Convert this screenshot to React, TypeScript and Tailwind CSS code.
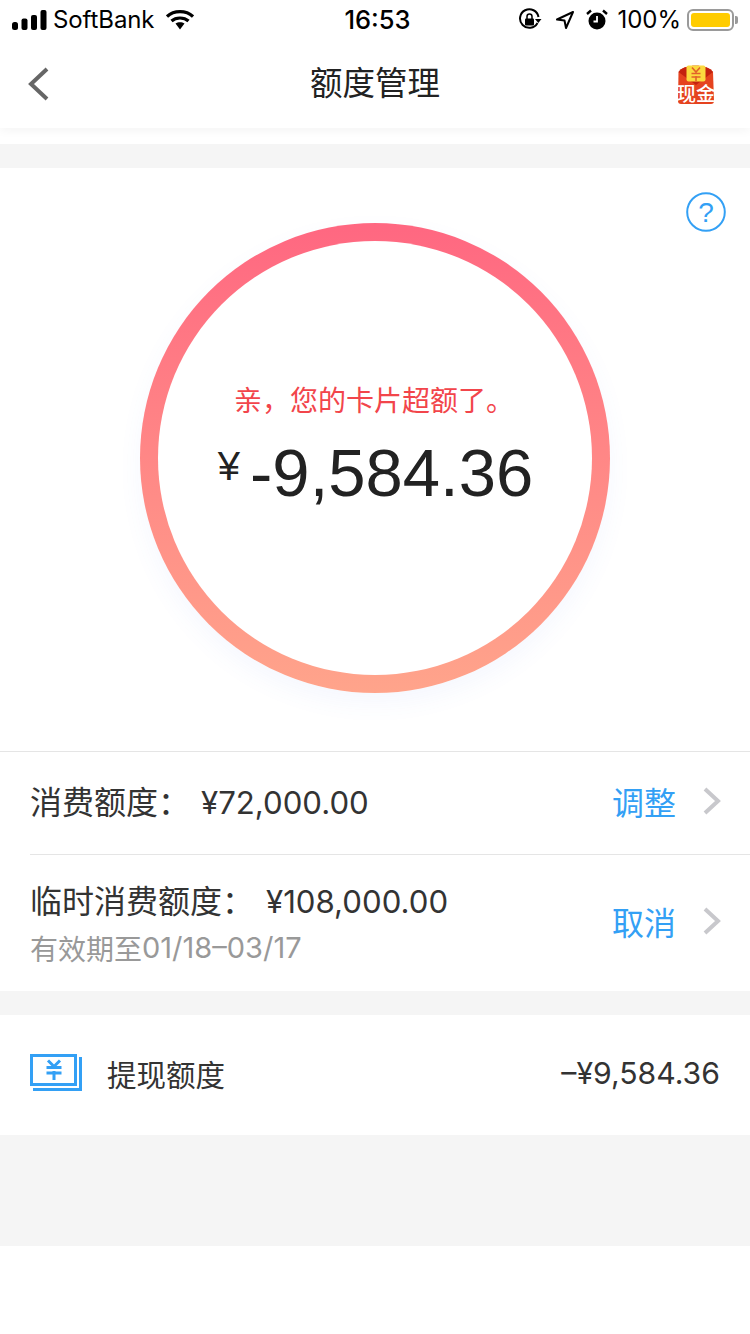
const cjk = "font-['Liberation_Sans','Noto_Sans_CJK_SC',sans-serif]";
const zh = "font-['Noto_Sans_CJK_SC',sans-serif]";

function Signal() {
  return (
    <svg width="36" height="20" viewBox="0 0 36 20" fill="#000">
      <rect x="0" y="12" width="6" height="8" rx="2.5" />
      <rect x="9.500" y="8.500" width="6" height="11.500" rx="2" />
      <rect x="19" y="5" width="6" height="15" rx="2" />
      <rect x="28.500" y="0" width="6" height="20" rx="2" />
    </svg>
  );
}

function Wifi() {
  return (
    <svg width="28" height="20" viewBox="0 0 28 20">
      <path d="M1 6.500 C8 0 20 0 27 6.500" fill="none" stroke="#000" strokeWidth="3.200" />
      <path d="M5.500 11 C10 7 18 7 22.500 11" fill="none" stroke="#000" strokeWidth="3.200" />
      <path d="M9.500 13.500 C12 11.700 16 11.700 18.500 13.500 L14 19.500 Z" fill="#000" />
    </svg>
  );
}

function RotationLock() {
  return (
    <svg width="24" height="24" viewBox="0 0 24 24" fill="none">
      <path d="M19.500 15 A9.300 9.300 0 1 1 20.500 9" stroke="#000" strokeWidth="2" />
      <path d="M17 11 L23.500 11 L20.300 15 Z" fill="#000" />
      <rect x="7" y="10.500" width="9" height="7" rx="1" fill="#000" />
      <path d="M9 11 V8.500 a2.500 2.500 0 0 1 5 0 V11" stroke="#000" strokeWidth="1.500" />
    </svg>
  );
}

function Location() {
  return (
    <svg width="20" height="20" viewBox="0 0 20 20" fill="none">
      <path d="M18 2 L2 9.500 L9.500 10.500 L11 18 Z" stroke="#000" strokeWidth="2" strokeLinejoin="round" />
    </svg>
  );
}

function Alarm() {
  return (
    <svg width="22" height="22" viewBox="0 0 22 22">
      <circle cx="11" cy="12" r="8.500" fill="#000" />
      <path d="M11 7 V12.500 H7.500" fill="none" stroke="#fff" strokeWidth="1.800" />
      <path d="M1 5 L5 1.500 M21 5 L17 1.500" stroke="#000" strokeWidth="2.400" />
    </svg>
  );
}

function Battery() {
  return (
    <div className="flex items-center">
      <div className="w-[47px] h-[22px] rounded-[6px] border-2 border-[#9a9a9a] p-[2px] flex">
        <div className="flex-1 rounded-[3px] bg-[#ffcc00]" />
      </div>
      <div className="w-[3px] h-[8px] bg-[#9a9a9a] rounded-r-[2px] ml-[1px]" />
    </div>
  );
}

function RedPacket() {
  return (
    <svg width="44" height="48" viewBox="0 0 44 48" className="mt-[6px]">
      <path d="M4.500 9 C9 0.500 34 0.500 39 9 L40 38 C40 40 39 41 37 41 L7 41 C5 41 4 40 4 38 Z" fill="#e5431f" />
      <path d="M4.500 9 C9 0.500 34 0.500 39 9 L22 22 Z" fill="#c4220f" />
      <rect x="12.500" y="2.500" width="19" height="16" rx="2" fill="#fbd93f" />
      <path d="M22 13 L22 18 M18 4.500 L22 9 L26 4.500 M17.500 10.500 H26.500 M17.500 14 H26.500" stroke="#e2612a" strokeWidth="1.600" fill="none" />
      <text x="22" y="38" textAnchor="middle" fontSize="19.500" fontWeight="500" fill="#fff" style={{ fontFamily: "'Noto Sans CJK SC', sans-serif" }}>现金</text>
    </svg>
  );
}

function Chevron() {
  return (
    <svg width="20" height="30" viewBox="0 0 20 30" fill="none" className="mb-[4px]">
      <path d="M3 3 L16 15 L3 27" stroke="#c8c8cc" strokeWidth="4" />
    </svg>
  );
}

function CashIcon() {
  return (
    <svg width="52" height="38" viewBox="0 0 52 38" fill="none" className="mb-[4px]">
      <rect x="1.500" y="1.500" width="44" height="29" stroke="#33a0f5" strokeWidth="3" />
      <path d="M50.500 3 V35.500 H3" stroke="#33a0f5" strokeWidth="3" />
      <path d="M24 17 V26 M18 6.500 L24 12.500 L30 6.500 M16.500 13.500 H31.500 M16.500 19 H31.500" stroke="#33a0f5" strokeWidth="3" />
    </svg>
  );
}

export default function App() {
  return (
    <div className={`w-[750px] h-[1334px] bg-white overflow-hidden ${cjk}`}>
      <div className="h-[128px] shadow-[0_2px_10px_rgba(0,0,0,0.05)] relative">
        <div className="h-[40px] grid grid-cols-[1fr_auto_1fr] items-center text-black">
          <div className="flex items-center pl-[12px] text-[24px] font-['Inter',sans-serif]">
            <Signal />
            <span className="ml-[5px] tracking-[-0.1px]">SoftBank</span>
            <span className="ml-[12px] flex"><Wifi /></span>
          </div>
          <div className="text-[25.500px] font-medium font-['Inter',sans-serif] pl-[5px]">16:53</div>
          <div className="flex items-center justify-end pr-[12px] text-[24px] font-['Inter',sans-serif]">
            <RotationLock />
            <span className="ml-[13px] flex"><Location /></span>
            <span className="ml-[11px] flex"><Alarm /></span>
            <span className="ml-[9px]">100%</span>
            <span className="ml-[6px] flex"><Battery /></span>
          </div>
        </div>
        <div className="h-[88px] grid grid-cols-[1fr_auto_1fr] items-center pl-[26px] pr-[32px]">
          <svg width="26" height="36" viewBox="0 0 26 36" fill="none">
            <path d="M21 3 L5 18 L21 33" stroke="#666" strokeWidth="4" />
          </svg>
          <div className={`text-[32.500px] leading-[44px] text-[#222] mb-[7px] pl-[6px] ${zh}`}>额度管理</div>
          <div className="flex justify-end"><RedPacket /></div>
        </div>
      </div>

      <div className="h-[16px]" />
      <div className="h-[24px] bg-[#f5f5f5]" />

      <div className="h-[583px] relative flex justify-center pt-[55px]">
        <svg className="absolute right-[24px] top-[24px]" width="40" height="40" viewBox="0 0 40 40" fill="none">
          <circle cx="20" cy="20" r="18.800" stroke="#33a0f5" strokeWidth="2" />
          <text x="20" y="30" textAnchor="middle" fontSize="28" fill="#33a0f5" style={{ fontFamily: "'Liberation Sans', sans-serif" }}>?</text>
        </svg>
        <div className="w-[470px] h-[470px] rounded-full p-[18px] bg-gradient-to-b from-[#ff6781] to-[#ffa48b] shadow-[0_10px_24px_rgba(90,120,240,0.06)]">
          <div className="w-full h-full rounded-full bg-white flex flex-col items-center pt-[136px]">
            <div className={`text-[28px] leading-[44px] text-[#f2454b] pr-[2px] ${zh}`}>亲，您的卡片超额了。</div>
            <div className="flex items-start mt-[14px] ml-[1px] text-[#222] font-['Liberation_Sans',sans-serif]">
              <span className="text-[40px] leading-[44px] mt-[9px] mr-[10px]">¥</span>
              <span className="text-[67px] leading-[76px]">-9,584.36</span>
            </div>
          </div>
        </div>
      </div>

      <div className="border-t border-[#e5e5e5] h-[103px] pl-[30px] pr-[28px] flex items-center justify-between">
        <div className="text-[31.200px] leading-[44px] text-[#333] flex mb-[4px]">
          <span className={`text-[32px] ${zh}`}>消费额度：</span>
          <span className="ml-[11px] mt-[3px] font-['Inter',sans-serif]">¥72,000.00</span>
        </div>
        <div className="flex items-center">
          <span className={`text-[32px] leading-[44px] text-[#33a0f5] mr-[26px] mb-[4px] ${zh}`}>调整</span>
          <Chevron />
        </div>
      </div>
      <div className="ml-[30px] border-t border-[#e5e5e5]" />
      <div className="h-[136px] pl-[30px] pr-[28px] flex items-center justify-between">
        <div className="mb-[2px]">
          <div className="text-[31.200px] leading-[44px] text-[#333] flex mb-[5px]">
            <span className={`text-[32px] ${zh}`}>临时消费额度：</span>
            <span className="ml-[12px] mt-[3px] font-['Inter',sans-serif]">¥108,000.00</span>
          </div>
          <div className="text-[29px] leading-[38px] text-[#999] flex font-['Inter',sans-serif]">
            <span className={`text-[28px] ${zh}`}>有效期至</span>01/18–03/17
          </div>
        </div>
        <div className="flex items-center">
          <span className={`text-[32px] leading-[44px] text-[#33a0f5] mr-[26px] mb-[4px] ${zh}`}>取消</span>
          <Chevron />
        </div>
      </div>

      <div className="h-[24px] bg-[#f5f5f5]" />

      <div className="h-[120px] pl-[30px] pr-[30px] flex items-center justify-between">
        <div className="flex items-center">
          <CashIcon />
          <span className={`ml-[25px] text-[29.500px] leading-[44px] text-[#333] mb-[4px] ${zh}`}>提现额度</span>
        </div>
        <span className="text-[30.200px] text-[#333] mb-[2px] font-['Inter',sans-serif]">–¥9,584.36</span>
      </div>

      <div className="h-[111px] bg-[#f5f5f5]" />
    </div>
  );
}
